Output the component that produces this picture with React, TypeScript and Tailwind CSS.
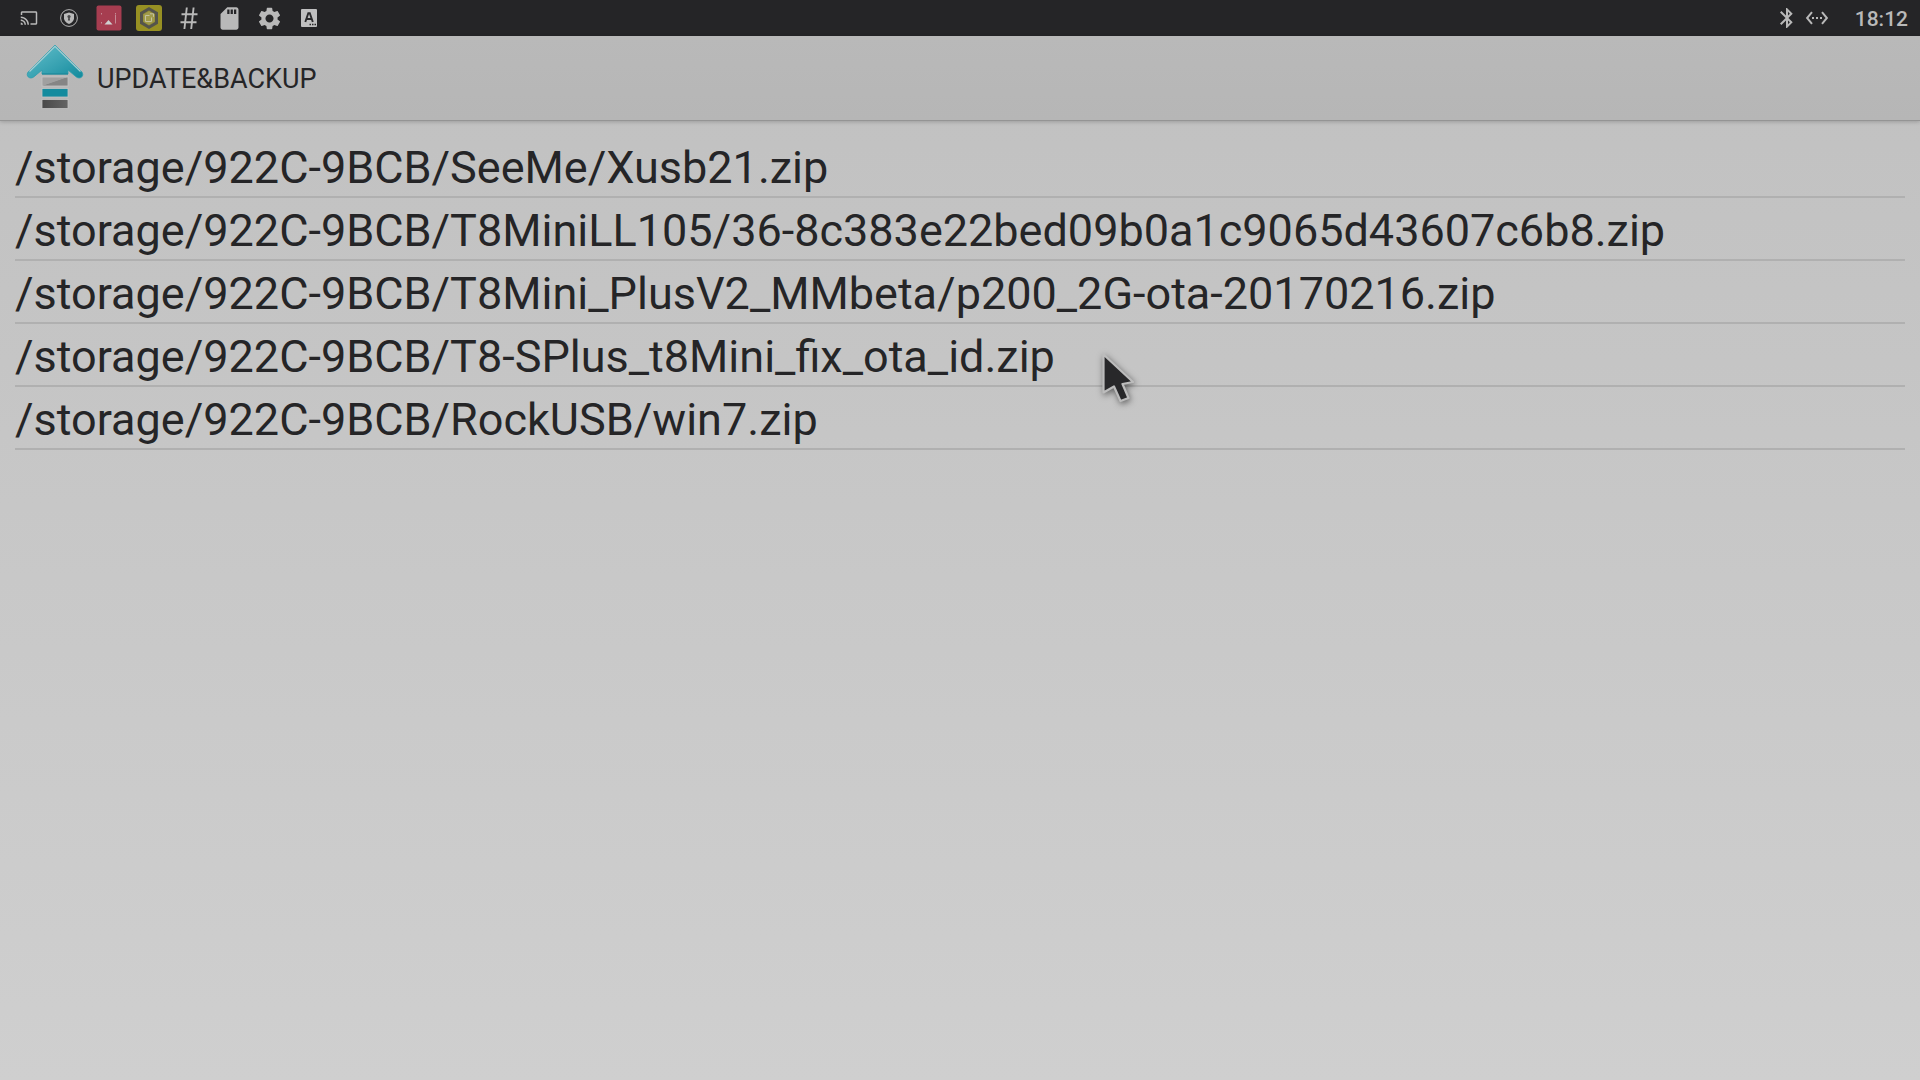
import type { ReactNode } from "react";
import { MdBluetooth, MdCast, MdSdCard, MdSettings, MdSettingsEthernet } from "react-icons/md";

const FILES = [
  "/storage/922C-9BCB/SeeMe/Xusb21.zip",
  "/storage/922C-9BCB/T8MiniLL105/36-8c383e22bed09b0a1c9065d43607c6b8.zip",
  "/storage/922C-9BCB/T8Mini_PlusV2_MMbeta/p200_2G-ota-20170216.zip",
  "/storage/922C-9BCB/T8-SPlus_t8Mini_fix_ota_id.zip",
  "/storage/922C-9BCB/RockUSB/win7.zip",
];

function ShieldIcon() {
  return (
    <svg width="20" height="20" viewBox="0 0 20 20" fill="none">
      <circle cx="10" cy="10" r="8.4" stroke="#b4b4b4" strokeWidth="1" />
      <path d="M10 4.6 15 6v4.2c0 2.4-2 4.4-5 5.8-3-1.4-5-3.4-5-5.8V6z" fill="#b9b9b9" />
      <circle cx="10" cy="8.6" r="1.6" fill="#48484a" />
      <path d="M9.3 9.5h1.4l.4 3H8.900z" fill="#48484a" />
    </svg>
  );
}

function ScreenshotIcon() {
  return (
    <svg width="26" height="26" viewBox="0 0 26 26">
      <rect x="0.5" y="0.5" width="25" height="25" rx="2" fill="#a63d50" />
      <path d="M5.5 8v1.5M5.5 17v1.500M19.5 8v1.5M19.5 10v8.5" stroke="#c58b95" strokeWidth="1" />
      <path d="M8.500 19.5 12.5 15l4 4.5z" fill="#d0d0d0" />
    </svg>
  );
}

function HexagonIcon() {
  return (
    <svg width="26" height="26" viewBox="0 0 26 26" fill="none">
      <rect width="26" height="26" rx="3" fill="#979023" />
      <path d="M13 3.8 20.5 8.2v9.6L13 22.2 5.5 17.8V8.2z" fill="#979035" stroke="#54544c" strokeWidth="3" />
      <path d="M13 6.5 18.3 9.5v6.8L13 19.5l-5.3-3.2V9.5z" fill="#a09b4c" />
      <path d="M13.5 10.5h-4v6h6v-4M14 8.8h3.5v3" stroke="#c4c2a0" strokeWidth="1" />
    </svg>
  );
}

function HashIcon() {
  return (
    <svg width="20" height="24" viewBox="0 0 20 24" fill="none" stroke="#b9b9b9" strokeWidth="1.9">
      <path d="M7.800 1.5 5.400 23M14.6 1.5 12.2 23M2.5 8.2h16M1.5 16.2h16" />
    </svg>
  );
}

function KeyboardIcon() {
  return (
    <svg width="18" height="20" viewBox="0 0 18 20">
      <rect x="1" y="1" width="16" height="18" rx="1" fill="#c0c0c0" />
      <path
        d="M5.3 14 8.3 5.2h1.5L12.8 14M6.5 11h5.2"
        fill="none"
        stroke="#29292b"
        strokeWidth="1.9"
      />
      <path d="M9.5 16.5h1.5M12 16.5h1.5M14.5 16.5H16" stroke="#29292b" strokeWidth="1.3" />
    </svg>
  );
}

function AppLogo() {
  return (
    <svg width="64" height="72" viewBox="0 0 64 72">
      <defs>
        <linearGradient id="arrow" x1="0" y1="0" x2="1" y2="1">
          <stop offset="0.2" stopColor="#55b5c2" />
          <stop offset="0.6" stopColor="#35a0b0" />
          <stop offset="1" stopColor="#128a9c" />
        </linearGradient>
        <linearGradient id="silver" x1="0" y1="0" x2="1" y2="1">
          <stop offset="0.48" stopColor="#a0a0a0" />
          <stop offset="0.52" stopColor="#858585" />
        </linearGradient>
        <linearGradient id="steel" x1="0" y1="0" x2="1" y2="0">
          <stop offset="0" stopColor="#484848" />
          <stop offset="1" stopColor="#646464" />
        </linearGradient>
      </defs>
      <path
        d="M32 2 58.500 28.5c3.5 4-1 8.5-5.2 5.500L45 27v4H19v-4L10.700 34C6.500 37 2 32.500 5.500 28.5z"
        fill="url(#arrow)"
        stroke="#2c9dad"
        strokeWidth="0.8"
      />
      <path d="M6.500 28.500 32 3.300 57.500 28.500" fill="none" stroke="#a5cdd2" strokeWidth="1.3" />
      <path d="M19 31h26" stroke="#168294" strokeWidth="1" />
      <g stroke="#c4c4c4" strokeWidth="0.800">
        <rect x="19" y="34" width="26" height="9" fill="url(#silver)" />
        <rect x="19" y="45.5" width="26" height="8.500" fill="#148b9e" />
        <rect x="19" y="56.5" width="26" height="9" fill="url(#steel)" />
      </g>
    </svg>
  );
}

function Pointer() {
  return (
    <svg
      width="36"
      height="52"
      viewBox="0 0 36 52"
      aria-hidden="true"
      className="pointer-events-none absolute left-[1101px] top-[352px] drop-shadow-[1px_2px_3px_rgba(0,0,0,0.5)]"
    >
      <path
        d="M2.500 2.500v38l10.500-6 6.500 14.500 8-3-6-14 10.500-2z"
        fill="#28282a"
        stroke="#bcbcbc"
        strokeWidth="2.2"
        strokeLinejoin="round"
      />
    </svg>
  );
}

function StatusSlot({ children }: { children: ReactNode }) {
  return <span className="flex w-10 items-center justify-center">{children}</span>;
}

function StatusBar() {
  return (
    <div className="flex h-9 items-center justify-between bg-[#252527] pl-[9px] pr-3 text-[#b9b9b9]">
      <div className="flex items-center">
        <StatusSlot><MdCast size={18} /></StatusSlot>
        <StatusSlot><ShieldIcon /></StatusSlot>
        <StatusSlot><ScreenshotIcon /></StatusSlot>
        <StatusSlot><HexagonIcon /></StatusSlot>
        <StatusSlot><HashIcon /></StatusSlot>
        <StatusSlot><MdSdCard size={27} /></StatusSlot>
        <StatusSlot><MdSettings size={27} /></StatusSlot>
        <StatusSlot><KeyboardIcon /></StatusSlot>
      </div>
      <div className="flex items-center">
        <MdBluetooth size={24} />
        <MdSettingsEthernet size={24} className="ml-1.5" />
        <time className="ml-[26px] pt-0.5 text-[21px] font-medium leading-8">18:12</time>
      </div>
    </div>
  );
}

export default function App() {
  return (
    <div className="relative flex min-h-screen flex-col overflow-hidden bg-linear-to-b from-[#c0c0c0] to-[#cfcfcf] font-[Roboto,sans-serif] text-[#252527]">
      <StatusBar />
      <header className="flex h-[85px] items-center gap-2.5 border-b border-[#949494] bg-linear-to-b from-[#b9b9b9] to-[#b6b6b6] pt-0.5 pl-[23px] shadow-[0_1px_4px_rgba(0,0,0,0.2)]">
        <AppLogo />
        <h1 className="text-[27px] leading-8">UPDATE&amp;BACKUP</h1>
      </header>
      <main className="px-[15px] pt-3.5">
        <ul>
          {FILES.map((file) => (
            <li key={file} className="border-b-2 border-[#b0b0b0]">
              <button className="block w-full pt-1 text-left text-[45px] leading-[57px]">{file}</button>
            </li>
          ))}
        </ul>
      </main>
      <Pointer />
    </div>
  );
}
